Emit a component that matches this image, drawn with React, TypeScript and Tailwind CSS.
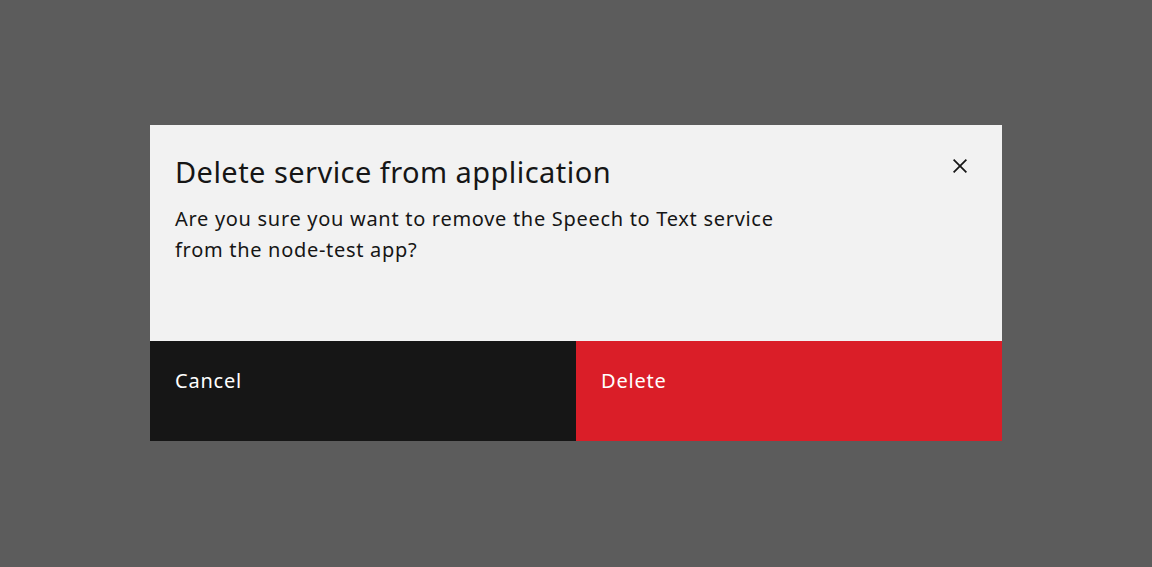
import { useState } from "react";

const font = { fontFamily: '"Noto Sans", "Open Sans", sans-serif' };

const CloseIcon = () => (
  <svg width="28" height="28" viewBox="0 0 32 32" fill="#161616" aria-hidden="true">
    <path d="M24 9.4L22.6 8 16 14.6 9.4 8 8 9.4 14.6 16 8 22.6 9.4 24 16 17.4 22.6 24 24 22.6 17.4 16 24 9.4z" />
  </svg>
);

export default function App() {
  const [open, setOpen] = useState(true);

  return (
    <div className="w-full h-[567px] bg-[#5c5c5c] flex justify-center pt-[125px]" style={font}>
      {open && (
        <div className="w-[852px] h-[316px] bg-[#f2f2f2] flex flex-col">
          <div className="flex-1 flex flex-col pl-[25px] pr-[25px] pt-[29px]">
            <div className="flex items-start justify-between">
              <h2 className="text-[29px] leading-[36px] tracking-[0.45px] text-[#161616] font-normal">
                Delete service from application
              </h2>
              <button
                className="w-[28px] h-[28px] mt-[-2px] mr-[3px] flex items-center justify-center"
                onClick={() => setOpen(false)}
              >
                <CloseIcon />
              </button>
            </div>
            <p className="mt-[13px] text-[20px] leading-[31px] tracking-[0.7px] text-[#161616] max-w-[630px]">
              Are you sure you want to remove the Speech to Text service from the node-test app?
            </p>
          </div>
          <div className="h-[100px] grid grid-cols-2">
            <button className="bg-[#161616] text-white text-[20px] tracking-[0.8px] text-left pl-[25px] pt-[25px] flex items-start">
              Cancel
            </button>
            <button className="bg-[#da1e28] text-white text-[20px] tracking-[0.8px] text-left pl-[25px] pt-[25px] flex items-start">
              Delete
            </button>
          </div>
        </div>
      )}
    </div>
  );
}
